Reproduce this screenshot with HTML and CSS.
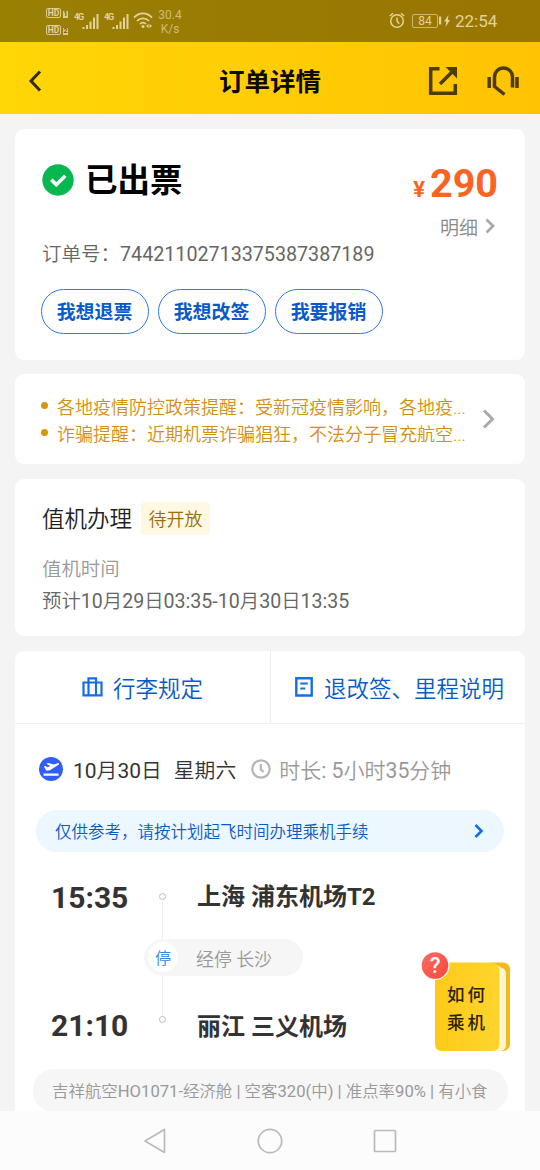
FILE: index.html
```html
<!DOCTYPE html>
<html lang="zh-CN">
<head>
<meta charset="utf-8">
<title>订单详情</title>
<link rel="stylesheet" href="styles.css">
</head>
<body>
<div class="screen">
  <header class="top">
    <div class="status">
      <div class="hd-col">
        <div class="hd"><span class="hd-box">HD</span><span class="hd-num">1</span></div>
        <div class="hd"><span class="hd-box">HD</span><span class="hd-num">2</span></div>
      </div>
      <span class="g4">4G</span>
      <svg class="signal" width="17" height="17" viewBox="0 0 17 17"><path d="M1.5 14v2M5 12v4M8.500 8.500v7.500M12 4.500v11.500M15.500 1v15" stroke="currentColor" stroke-width="2"/></svg>
      <span class="g4 second">4G</span>
      <svg class="signal" width="17" height="17" viewBox="0 0 17 17"><path d="M1.5 14v2M5 12v4M8.500 8.500v7.500M12 4.500v11.500M15.500 1v15" stroke="currentColor" stroke-width="2"/></svg>
      <svg class="wifi" width="20" height="17" viewBox="0 0 20 17" fill="none" stroke="currentColor" stroke-width="1.8"><path d="M1 5.600C6.300 0 13.700 0 19 5.600M4 9c3.300-3.600 8.700-3.600 12 0M7 12c1.700-1.900 4.300-1.900 6 0"/><circle cx="10" cy="14.500" r="1.500" fill="currentColor" stroke="none"/><path d="M13 14l2.500-2v4zM19 14l-2.500-2v4z" fill="currentColor" stroke="none"/></svg>
      <div class="speed">30.4<br>K/s</div>
      <svg class="alarm" width="16" height="17" viewBox="0 0 16 17" fill="none" stroke="currentColor" stroke-width="1.500"><circle cx="8" cy="9" r="6.300"/><path d="M8 5.500V9l2.200 2.700M.8 4L4 1.200M15.200 4L12 1.200"/></svg>
      <span class="battery">84</span>
      <svg class="charge" width="12" height="14" viewBox="0 0 12 14" fill="currentColor"><path d="M0 2.500h2.200v8H0zM9.500 1L5 7.500h2.300L6.500 13l4.500-7H8.800z"/></svg>
      <span class="clock">22:54</span>
    </div>
    <div class="navbar">
      <svg class="back" width="14" height="22" viewBox="0 0 14 22"><path d="M12 1.500L3 11l9 9.500" fill="none" stroke="#332b05" stroke-width="3"/></svg>
      <h1 class="title">订单详情</h1>
      <svg class="share" width="30" height="30" viewBox="0 0 30 30" fill="none" stroke="#4c3d05" stroke-width="3.500"><path d="M11.500 2.700H2.700v24.600h24.600V18M12 18L25.500 4.500"/><path d="M17.500 1H29v11.500l-4-4-3.500-3.500z" fill="#4c3d05" stroke="none"/></svg>
      <svg class="service" width="32" height="32" viewBox="0 0 32 32" fill="none" stroke="#4c3d05"><path d="M17.500 29.500L7.500 21.500V12a9 9 0 0 1 18 0v10.500" stroke-width="3.500"/><path d="M2.200 12v11M30 12v11" stroke-width="3.500"/></svg>
    </div>
  </header>

  <main class="content">
    <section class="card order">
      <div class="order-head">
        <svg class="ok" width="32" height="32" viewBox="0 0 32 32"><circle cx="16" cy="16" r="15.700" fill="#07b850"/><path d="M9.300 15.800l5 4.900 9-9" fill="none" stroke="#fff" stroke-width="3.600"/></svg>
        <h2 class="order-state">已出票</h2>
        <div class="price"><span class="yen">¥</span>290</div>
      </div>
      <div class="detail">明细<svg width="10" height="16" viewBox="0 0 10 16"><path d="M1.500 1.500L8 8l-6.500 6.500" fill="none" stroke="#aaa" stroke-width="2.800"/></svg></div>
      <div class="order-no">订单号：<span class="n">74421102713375387387189</span></div>
      <div class="actions">
        <span class="pill">我想退票</span><span class="pill">我想改签</span><span class="pill">我要报销</span>
      </div>
    </section>

    <section class="card notice">
      <ul class="notice-list">
        <li>各地疫情防控政策提醒：受新冠疫情影响，各地疫...</li>
        <li>诈骗提醒：近期机票诈骗猖狂，不法分子冒充航空...</li>
      </ul>
      <svg class="notice-arrow" width="13" height="20" viewBox="0 0 13 20"><path d="M2 1.500l8.500 8.500L2 18.500" fill="none" stroke="#aaa" stroke-width="3"/></svg>
    </section>

    <section class="card checkin">
      <div class="checkin-head"><h3>值机办理</h3><span class="tag">待开放</span></div>
      <p class="label">值机时间</p>
      <p class="value">预计<span class="n">10</span>月<span class="n">29</span>日<span class="n">03:35-10</span>月<span class="n">30</span>日<span class="n">13:35</span></p>
    </section>

    <section class="card flight">
      <div class="tabs">
        <div class="tab">
          <svg class="luggage" width="21" height="20" viewBox="0 0 21 20" fill="none" stroke="#146eeb" stroke-width="2.200"><path d="M1.500 5.500h18v12.800h-18zM6.500 18V1.300h7.500V18"/></svg>
          <span>行李规定</span>
        </div>
        <div class="tab rules">
          <svg class="doc" width="18" height="20" viewBox="0 0 18 20" fill="none" stroke="#146eeb" stroke-width="2.400"><path d="M1.300 1.300h15.400v17.200H1.300z"/><path d="M5.300 6.500h7.500M5.300 11.500h5" stroke-width="2.200"/></svg>
          <span>退改签、里程说明</span>
        </div>
      </div>
      <div class="date-row">
        <svg class="plane" width="24" height="24" viewBox="0 0 24 24"><circle cx="12" cy="12" r="12" fill="#315ef5"/><path d="M4.500 16.500h15v2.200h-15zM4.800 9.500l1.500-.5 2.200 1.200 2.800-1.200-4-2.200 1.700-.7 6 1.500 3.500-1.400c1.500-.5 2.200.8 1 1.500L11 13.200l-3.500.6z" fill="#fff"/></svg>
        <span class="date"><span class="n">10</span>月<span class="n">30</span>日</span><span class="week">星期六</span>
        <svg class="timer" width="20" height="20" viewBox="0 0 20 20" fill="none" stroke="#b5b5b5" stroke-width="2.200"><circle cx="10" cy="10" r="8.700"/><path d="M9.800 5v5.500l3 2.500"/></svg>
        <span class="duration">时长<span class="n">: 5</span>小时<span class="n">35</span>分钟</span>
      </div>
      <div class="tip"><span>仅供参考，请按计划起飞时间办理乘机手续</span><svg width="10" height="14" viewBox="0 0 10 14"><path d="M1.500 1L7.500 7l-6 6" fill="none" stroke="#146eeb" stroke-width="2.600"/></svg></div>
      <div class="route">
        <div class="leg"><time>15:35</time><i class="dot"></i><strong>上海 浦东机场T2</strong></div>
        <div class="stopover">
          <div class="via"><b>停</b><span>经停 长沙</span></div>
        </div>
        <div class="leg arrive"><time>21:10</time><i class="dot"></i><strong>丽江 三义机场</strong></div>
        <div class="guide">
          <svg width="90" height="102" viewBox="0 0 90 102">
            <defs>
              <linearGradient id="cover" x2="1"><stop stop-color="#ffca18"/><stop offset="1" stop-color="#ffd42d"/></linearGradient>
              <linearGradient id="badge" x2="1" y2="1"><stop stop-color="#ff6b61"/><stop offset="1" stop-color="#f2483e"/></linearGradient>
            </defs>
            <path d="M70 12.500h12a7 7 0 0 1 7 7V94a7 7 0 0 1-7 7H70z" fill="#f2b91b"/>
            <path d="M74 14l6 3.500q5 1.500 5 6V95q0 5-5 6H70z" fill="#fff5cf"/>
            <path d="M14 12.500h57q7 1 7.500 8v73.500q0 7-7 7H21q-7 0-7-7z" fill="url(#cover)"/>
            <circle cx="14" cy="15.500" r="14.500" fill="#fff"/><circle cx="14" cy="15.500" r="13.300" fill="url(#badge)"/>
          </svg>
          <span class="question">?</span>
          <span class="guide-text">如何<br>乘机</span>
        </div>
      </div>
      <div class="plane-info">吉祥航空<span class="n">HO1071-</span>经济舱<span class="n"> | </span>空客<span class="n">320(</span>中<span class="n">) | </span>准点率<span class="n">90% | </span>有小食</div>
    </section>
  </main>

  <nav class="system">
    <svg width="24" height="28" viewBox="0 0 24 28"><path d="M21.500 2.500v23L2 14z"/></svg>
    <svg width="28" height="28" viewBox="0 0 28 28"><circle cx="14" cy="14" r="11.700"/></svg>
    <svg width="24" height="28" viewBox="0 0 24 28"><rect x="1.500" y="3.500" width="21" height="21" rx=".8"/></svg>
  </nav>
</div>
</body>
</html>
```
FILE: styles.css
```css
* { box-sizing: border-box; margin: 0; padding: 0; }
body {
  font-family: Roboto, "Noto Sans CJK SC", sans-serif;
  font-weight: 350;
  background: #f4f4f4;
}
svg { display: block; flex: none; }
.n { font-weight: 400; font-size: 1.010em; }
.screen {
  width: 540px;
  height: 1170px;
  display: flex;
  flex-direction: column;
  overflow: hidden;
  white-space: nowrap;
}

/* status bar and title */
.top { flex: none; height: 114px; background: linear-gradient(90deg, #ffd606, #ffc304); }
.status {
  height: 42px;
  padding-left: 46px;
  display: flex;
  align-items: flex-start;
  background: rgba(0, 0, 0, .4);
  color: #e3d29b;
  font-weight: 400;
}
.hd-col { width: 28px; padding-top: 8px; display: flex; flex-direction: column; gap: 7px; }
.hd { display: flex; align-items: flex-end; gap: 2px; height: 10px; }
.hd-box { width: 15px; height: 10px; border: 1px solid #dccb90; border-radius: 2px; font: 700 8.500px/8px Roboto, sans-serif; text-align: center; }
.hd-num { width: 5px; height: 7px; background: #dccb90; color: #6c5905; font: 700 7px/7px Roboto, sans-serif; text-align: center; }
.g4 { width: 8px; margin-top: 11px; font: 700 9px/12px Roboto, sans-serif; letter-spacing: -1.200px; }
.g4.second { margin-left: 5px; }
.signal { margin-top: 13px; }
.wifi { margin: 12px 0 0 4px; }
.speed { width: 32px; margin: 9px 0 0 1px; font-size: 12px; line-height: 13.500px; text-align: center; color: #cfbb7a; }
.alarm { margin: 12px 0 0 203px; }
.battery { width: 26px; height: 14px; margin: 14px 0 0 7px; border: 1px solid #cbb970; border-radius: 2px; font-size: 12px; line-height: 12.500px; text-align: center; }
.charge { margin: 14px 0 0 1px; }
.clock { margin: 11px 0 0 4px; font-size: 17px; line-height: 21px; }
.navbar { height: 72px; display: flex; align-items: center; padding: 6px 21px 0 28px; }
.title { margin: 1px 0 0 177px; font-size: 25.500px; font-weight: 700; line-height: 36px; color: #0c0900; }
.share { margin-left: auto; }
.service { margin-left: 29px; }

/* cards */
.content { flex: 1; min-height: 0; padding: 15px 15px 0; overflow: hidden; }
.card { background: #fff; border-radius: 9px; margin-bottom: 14.500px; }
.order { height: 231px; padding: 28px 26px 0; }
.order-head { display: flex; align-items: center; height: 46px; padding: 0 1px; }
.order-state { margin: 2px 0 0 11px; font-size: 32.500px; line-height: 40px; font-weight: 700; color: #000; }
.price { margin-left: auto; padding-top: 13px; font-size: 39.500px; line-height: 42px; font-weight: 700; color: #fa6422; }
.yen { margin-right: 5px; font-size: 22px; }
.detail { display: flex; justify-content: flex-end; align-items: center; gap: 7px; height: 24px; margin-top: 11px; padding-right: 4px; font-size: 19px; color: #888; }
.order-no { margin-top: 3px; padding-left: 1px; font-size: 19.500px; line-height: 27px; color: #666; }
.actions { display: flex; gap: 9px; margin-top: 21px; margin-left: -.500px; }
.pill { width: 108px; height: 45px; border: 1.500px solid #2d7be5; border-radius: 23px; text-align: center; font-size: 18.900px; line-height: 45px; font-weight: 700; color: #095ac9; }
.notice { height: 90px; margin-top: -.500px; display: flex; align-items: center; justify-content: space-between; padding: 0 30px 0 26px; }
.notice-list { list-style: none; font-size: 18px; line-height: 27px; padding-top: 3px; color: #d09012; }
.notice-list li { display: flex; align-items: center; gap: 9px; }
.notice-list li::before { content: ""; width: 7px; height: 7px; margin-top: -4px; border-radius: 50%; background: #d8960e; }
.checkin { height: 157.500px; padding: 23px 27px 0; }
.checkin-head { display: flex; align-items: center; gap: 9px; height: 33px; }
.checkin h3 { padding-top: 3px; font-size: 22.500px; line-height: 33px; font-weight: 350; color: #222; }
.tag { width: 69px; height: 33px; border-radius: 4px; background: #fff8e3; text-align: center; font-size: 18px; line-height: 36px; color: #9c6d0c; }
.label { margin-top: 21px; font-size: 19.400px; line-height: 28px; color: #999; }
.value { margin-top: 4.500px; font-size: 19.400px; line-height: 28px; color: #666; }

/* flight */
.flight { height: 480px; }
.tabs { display: flex; height: 73px; border-bottom: 1.500px solid #f0f0f0; }
.tab { width: 255px; flex: none; display: flex; align-items: center; padding: 1px 0 0 67px; font-size: 22.500px; color: #095ac9; }
.tab.rules { border-left: 1px solid #ededed; padding-left: 24px; }
.tab svg { margin-right: 10px; }
.tab .doc { margin-right: 11px; }
.date-row { display: flex; align-items: center; height: 36px; margin-top: 27px; padding-left: 24px; font-size: 20.800px; color: #333; }
.date { margin-left: 10px; }
.week { margin-left: 12px; }
.timer { margin: 0 8px 0 15px; }
.duration { color: #999; font-size: 21px; }
.tip { display: flex; justify-content: space-between; align-items: center; height: 42px; margin: 23px 21px 0; padding: 1px 20px 0 19px; border-radius: 21px; background: #edf7ff; font-size: 16.500px; color: #095ac9; }
.route { position: relative; height: 217px; padding: 26px 0 0 36px; background: linear-gradient(#eee, #eee) 147px 49px / 1px 116px no-repeat; }
.leg { display: flex; align-items: center; height: 38px; color: #333; }
.leg time { width: 108px; padding-top: 2px; font-size: 30px; font-weight: 700; }
.leg strong { margin: -4px 0 0 31px; font-size: 24px; font-weight: 700; }
.dot { width: 7px; height: 7px; border: 1.500px solid #bbb; border-radius: 50%; background: #fff; }
.arrive time { margin-top: -1px; }
.arrive .dot { margin-top: -10px; }
.arrive strong { margin-top: -1px; }
.stopover { height: 90px; margin-left: 93px; padding-top: 23px; }
.via { display: flex; align-items: center; width: 159px; height: 37px; padding-left: 4px; border-radius: 19px; background: #f6f6f6; color: #999; font-size: 17.900px; }
.via span { padding-top: 2px; }
.via b { width: 30px; height: 30px; margin-right: 18px; border-radius: 50%; background: #fff; color: #3185e0; text-align: center; font-size: 16px; line-height: 33px; font-weight: 350; }
.guide { position: absolute; left: 406px; top: 98px; width: 90px; height: 102px; }
.question { position: absolute; left: 0; top: 2px; width: 28px; text-align: center; font-size: 22px; line-height: 28px; font-weight: 500; color: #fff; }
.guide-text { position: absolute; left: 26px; top: 31px; font-size: 17.500px; line-height: 28.500px; letter-spacing: 3px; font-weight: 500; color: #2b2203; }
.plane-info { height: 43px; margin: 0 17px 0 18px; padding-left: 19px; border-radius: 21px; background: #f6f6f6; color: #999; font-size: 16.450px; line-height: 45px; white-space: pre; }

/* system buttons */
.system { flex: none; height: 59px; background: #fcfcfc; display: flex; justify-content: center; gap: 89px; padding-top: 16px; }
.system svg { fill: none; stroke: #bababa; stroke-width: 1.700; stroke-linejoin: round; }
```
